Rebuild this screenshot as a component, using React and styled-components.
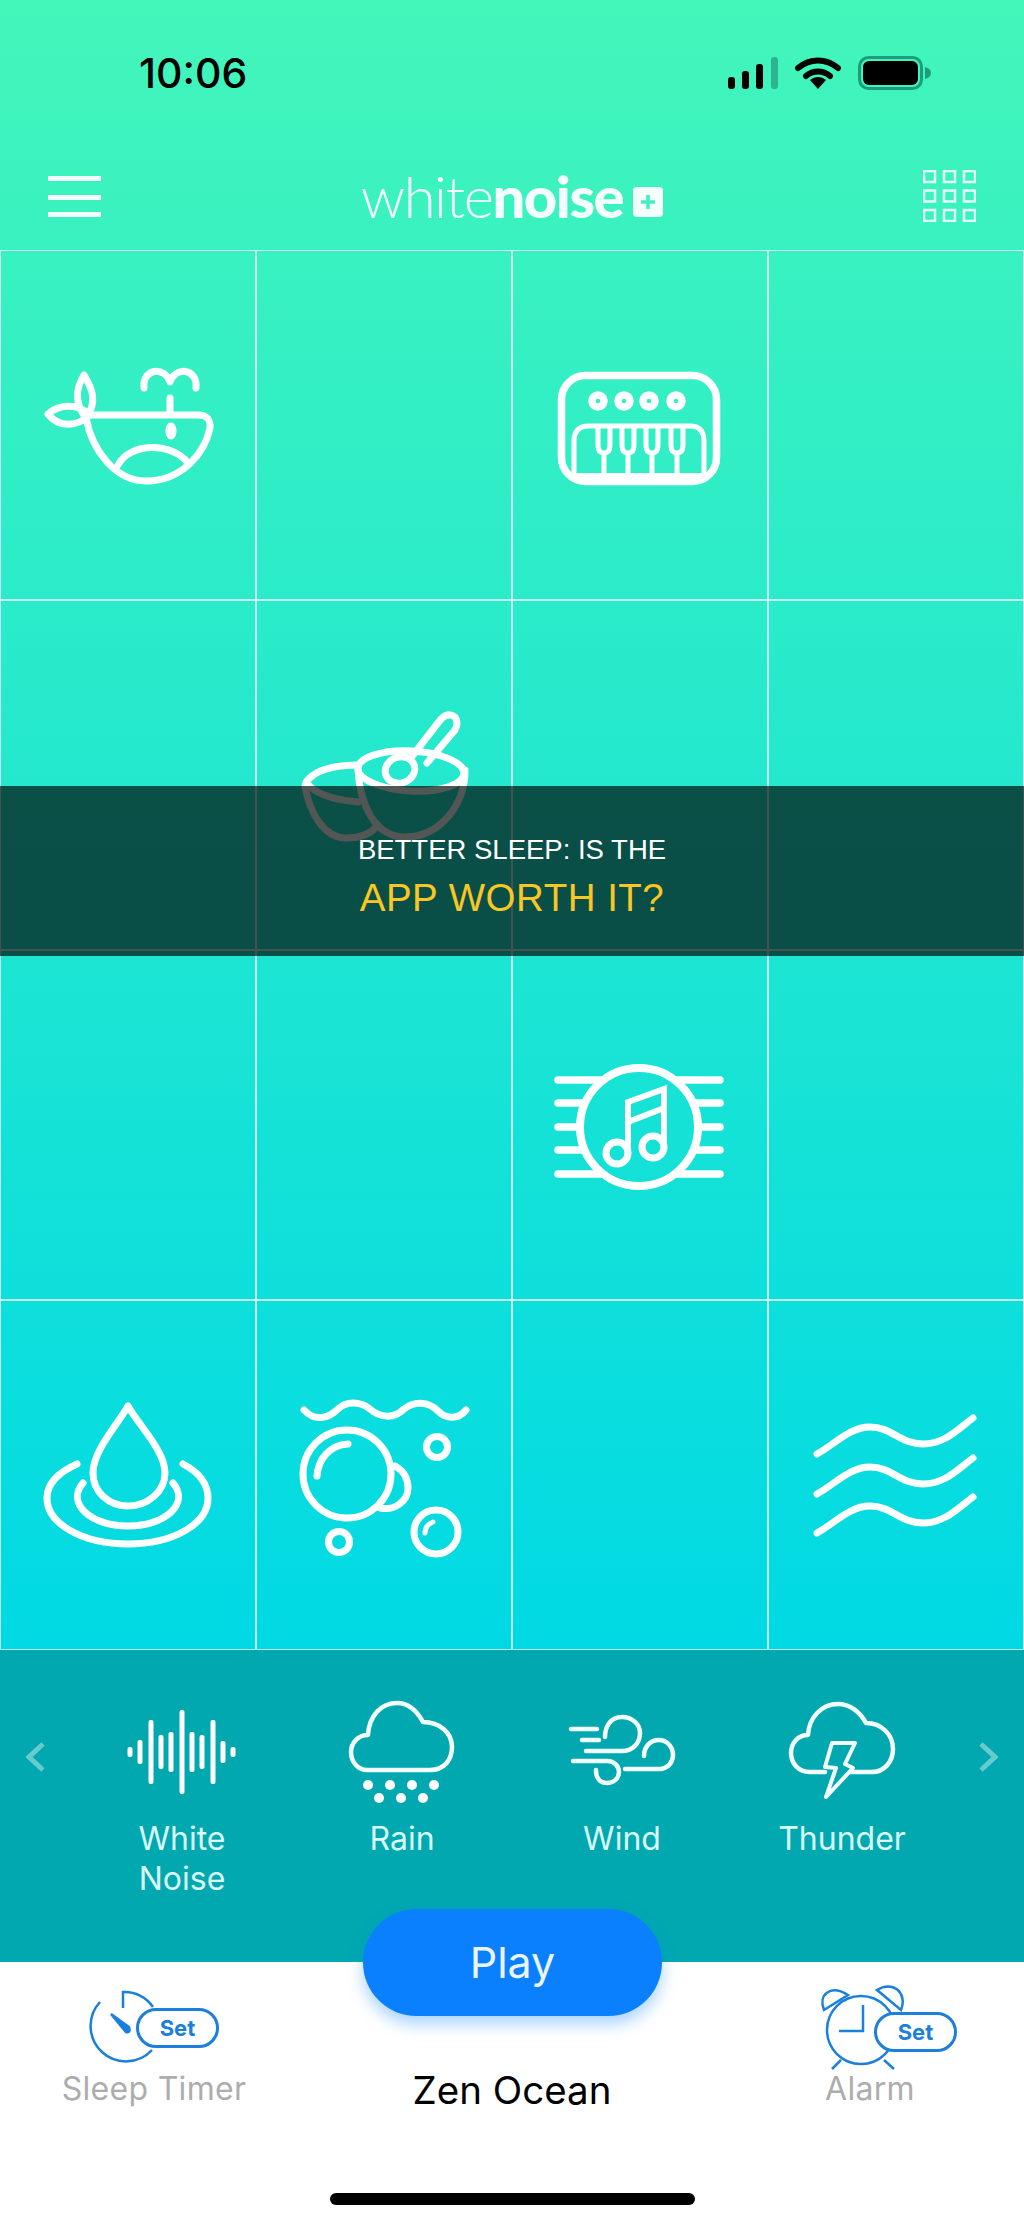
import styled, { createGlobalStyle } from "styled-components";

const GlobalStyle = createGlobalStyle`
  html, body {
    margin: 0;
    padding: 0;
    background: #ffffff;
  }
  * {
    box-sizing: border-box;
  }
`;

const SOUNDS = [
  { name: "White\nNoise", view: "122 1695 120 110", icon: <WaveIcon /> },
  { name: "Rain", view: "342 1695 120 110", icon: <RainIcon /> },
  { name: "Wind", view: "562 1695 120 110", icon: <WindIcon /> },
  { name: "Thunder", view: "782 1695 120 110", icon: <ThunderIcon /> },
];

const CELLS = [
  { view: "38 345 180 160", icon: <WhaleIcon /> },
  {},
  { view: "550 345 180 160", icon: <PianoIcon /> },
  {},
  {},
  { view: "294 695 180 160", icon: <BowlIcon /> },
  {},
  {},
  {},
  {},
  { view: "550 1045 180 160", icon: <MusicIcon /> },
  {},
  { view: "38 1394 180 160", icon: <DropIcon /> },
  { view: "294 1394 180 160", icon: <BubblesIcon /> },
  {},
  { view: "806 1394 180 160", icon: <WavesIcon /> },
];

export default function App() {
  return (
    <Page>
      <GlobalStyle />
      <Sky>
        <StatusBar>
          <Clock>10:06</Clock>
          <StatusIcons>
            <svg width="50" height="32" viewBox="0 0 50 32">
              <rect x="0" y="20" width="7" height="12" rx="3" fill="#000" />
              <rect x="14" y="14" width="7" height="18" rx="3" fill="#000" />
              <rect x="28" y="7" width="7" height="25" rx="3" fill="#000" />
              <rect x="43" y="0" width="7" height="32" rx="3" fill="#2bb48f" />
            </svg>
            <svg width="46" height="32" viewBox="0 0 46 32">
              <path d="M3 11 C15 1 31 1 43 11" fill="none" stroke="#000" strokeWidth="6" strokeLinecap="round" />
              <path d="M11 19 C18 13 28 13 35 19" fill="none" stroke="#000" strokeWidth="6" strokeLinecap="round" />
              <path d="M15 23 C20 19 26 19 31 23 L23 32 Z" fill="#000" />
            </svg>
            <svg width="73" height="34" viewBox="0 0 73 34">
              <rect x="1.5" y="1.5" width="62" height="31" rx="9" fill="none" stroke="#1d9d7c" strokeWidth="3" />
              <rect x="5" y="5" width="55" height="24" rx="6" fill="#000" />
              <path d="M67 11 C71 12 73 14 73 17 C73 20 71 22 67 23 Z" fill="#1d9d7c" />
            </svg>
          </StatusIcons>
        </StatusBar>
        <Header>
          <svg width="53" height="44" viewBox="0 0 53 44">
            <rect x="0" y="2" width="53" height="5" fill="#f4fffb" />
            <rect x="0" y="21" width="53" height="5" fill="#f4fffb" />
            <rect x="0" y="38" width="53" height="5" fill="#f4fffb" />
          </svg>
          <Logo>
            <LogoThin>white</LogoThin>
            <LogoBold>noise</LogoBold>
            <svg width="30" height="30" viewBox="0 0 30 30">
              <rect width="30" height="30" rx="4" fill="#f4fffb" />
              <path d="M15 8 V22 M8 15 H22" stroke="#3ef1c0" strokeWidth="3.500" />
            </svg>
          </Logo>
          <svg width="53" height="52" viewBox="0 0 53 52" fill="none" stroke="#e6fff6" strokeWidth="2.500">
            {[0, 19.500, 39].map((y) =>
              [0, 20, 40].map((x) => <rect key={`${x}-${y}`} x={x + 1} y={y + 1} width="11" height="11" />)
            )}
          </svg>
        </Header>
        <SoundGrid>
          {CELLS.map((cell, idx) => (
            <Cell key={idx}>
              {cell.icon && (
                <CellGlyph viewBox={cell.view}>{cell.icon}</CellGlyph>
              )}
            </Cell>
          ))}
        </SoundGrid>
      </Sky>

      <Panel>
        <Chevron viewBox="0 0 20 40">
          <path d="M17 7 L3 20 L17 33" />
        </Chevron>
        {SOUNDS.map((sound) => (
          <Sound key={sound.name}>
            <SoundGlyph viewBox={sound.view}>{sound.icon}</SoundGlyph>
            <SoundName>{sound.name}</SoundName>
          </Sound>
        ))}
        <Chevron viewBox="0 0 20 40">
          <path d="M3 7 L17 20 L3 33" />
        </Chevron>
      </Panel>

      <Footer>
        <PlayButton>Play</PlayButton>
        <FooterRow>
          <FooterItem>
            <SetIcon>
              <LineIcon viewBox="84 1984 140 86">
                <path d="M100 2002 A34 34 0 1 0 152 2050" />
                <path d="M123 2008 V1992 A34 34 0 0 1 153 2007" />
                <path d="M111 2014 L129 2027 Q131 2033 126 2032 Z" fill="#1b7fdc" />
              </LineIcon>
              <SetPill $left={52} $top={24}>Set</SetPill>
            </SetIcon>
            <ItemLabel>Sleep Timer</ItemLabel>
          </FooterItem>
          <TrackName>Zen Ocean</TrackName>
          <FooterItem>
            <SetIcon>
              <LineIcon viewBox="800 1984 140 86">
                <circle cx="861" cy="2030" r="34" />
                <path d="M863 2005 V2031 H839" />
                <path d="M841 2060 L832 2069 M884 2060 L894 2069" />
                <path d="M824 2010 C818 1995 830 1984 848 1995 Z" />
                <path d="M877 1990 C892 1980 908 1992 901 2010 Z" />
              </LineIcon>
              <SetPill $left={74} $top={28}>Set</SetPill>
            </SetIcon>
            <ItemLabel>Alarm</ItemLabel>
          </FooterItem>
        </FooterRow>
        <HomeIndicator />
      </Footer>

      <Banner>
        <BannerTop>BETTER SLEEP: IS THE</BannerTop>
        <BannerBottom>APP WORTH IT?</BannerBottom>
      </Banner>
    </Page>
  );
}

function WhaleIcon() {
  return (
    <>
      <path d="M88 415 H198 Q211 415 210 428 C205 452 183 481 146 481 C115 481 92 450 86 418" />
      <path d="M118 465 C130 442 172 442 188 463" />
      <path d="M86 418 C72 400 78 385 84 375 C92 388 98 402 86 418 Z" />
      <path d="M90 415 C76 402 58 405 48 414 C58 427 76 428 90 415 Z" />
      <path d="M170 398 V413" />
      <path d="M144 388 C142 368 165 366 170 382 C175 366 198 368 196 388" />
      <ellipse cx="171" cy="431" rx="2" ry="5" fill="#fff" />
    </>
  );
}

function PianoIcon() {
  const keys = [604, 628, 652, 677];
  const dots = [598, 624, 649, 676];
  return (
    <>
      <rect x="561.500" y="375.500" width="155" height="106" rx="24" strokeWidth="7.500" />
      <path d="M574 478 V441 Q574 426 589 426 H690 Q704 426 704 441 V478" strokeWidth="5" />
      <path d="M574 477 H704" strokeWidth="8" />
      {keys.map((x) => (
        <path key={x} d={`M${x - 6} 428 V445 Q${x - 6} 453 ${x} 453 Q${x + 6} 453 ${x + 6} 445 V428 M${x} 453 V476`} strokeWidth="5" />
      ))}
      {dots.map((x) => (
        <circle key={x} cx={x} cy="401" r="6" strokeWidth="7.500" />
      ))}
    </>
  );
}

function BowlIcon() {
  return (
    <>
      <ellipse cx="411" cy="771" rx="53" ry="20" transform="rotate(3 411 771)" />
      <path d="M358 770 C360 805 375 837 405 837 C440 837 465 805 465 770" />
      <path d="M358 765 C335 765 315 770 306 782 C315 795 335 800 358 802" />
      <path d="M305 786 C310 815 325 838 346 838 C358 838 370 835 378 825" />
      <ellipse cx="400" cy="770" rx="15" ry="13" transform="rotate(-20 400 770)" />
      <path d="M410 759 L441 719 Q448 712 455 717 Q459 723 455 730 L427 763" />
    </>
  );
}

function MusicIcon() {
  const rows = [1080, 1103, 1127, 1150, 1174];
  return (
    <>
      <circle cx="639" cy="1127" r="59" strokeWidth="8" />
      {rows.map((y, idx) => {
        const gap = idx === 2 ? 60 : idx === 1 || idx === 3 ? 56 : 38;
        return <path key={y} d={`M558 ${y} H${639 - gap} M${639 + gap} ${y} H720`} strokeWidth="7.500" />;
      })}
      <circle cx="617" cy="1153" r="11" strokeWidth="7" />
      <circle cx="653" cy="1147" r="11" strokeWidth="7" />
      <path d="M628 1153 V1102 L664 1089 V1147" strokeWidth="6" strokeLinejoin="miter" strokeLinecap="butt" />
      <path d="M628 1122 L664 1108" strokeWidth="6" strokeLinecap="butt" />
    </>
  );
}

function DropIcon() {
  return (
    <>
      <path d="M128 1405 C116 1426 93 1450 93 1472 C93 1491 109 1505 128 1505 C147 1505 165 1491 165 1472 C165 1450 140 1426 128 1405 Z" />
      <path d="M83 1482 C66 1502 90 1525 128 1525 C166 1525 190 1502 173 1482" />
      <path d="M77 1463 C57 1472 47 1484 47 1497 C47 1523 83 1543 128 1543 C173 1543 208 1523 208 1497 C208 1484 200 1472 183 1463" />
    </>
  );
}

function BubblesIcon() {
  return (
    <>
      <path d="M304 1409 C316 1422 330 1416 338 1408 C346 1400 360 1400 370 1408 C380 1417 394 1418 404 1408 C414 1400 428 1400 438 1410 C446 1418 458 1419 466 1409" />
      <circle cx="347" cy="1473" r="44" />
      <path d="M317 1475 C318 1458 330 1444 348 1443" />
      <path d="M395 1465 C404 1470 408 1478 408 1487 C408 1500 395 1510 380 1507" />
      <circle cx="437" cy="1446" r="10.500" />
      <circle cx="339" cy="1541" r="10.500" />
      <circle cx="436" cy="1531" r="22" />
      <path d="M425 1532 C425 1527 428 1523 433 1521" strokeWidth="5" />
    </>
  );
}

function WavesIcon() {
  const offsets = [0, 40, 79];
  return (
    <>
      {offsets.map((dy) => (
        <path
          key={dy}
          d={`M817 ${1453 + dy} C835 ${1443 + dy} 850 ${1426 + dy} 870 ${1426 + dy} C892 ${1426 + dy} 900 ${1443 + dy} 923 ${1443 + dy} C945 ${1443 + dy} 958 ${1428 + dy} 973 ${1417 + dy}`}
        />
      ))}
    </>
  );
}

function WaveIcon() {
  const bars = [
    [130, 5],
    [140, 12],
    [151, 32],
    [161, 17],
    [171, 20],
    [182, 42],
    [192, 20],
    [202, 17],
    [213, 32],
    [223, 11],
    [233, 5],
  ];
  return (
    <>
      {bars.map(([x, half]) => (
        <rect key={x} x={x - 2.500} y={1752 - half} width="5" height={half * 2} rx="2" fill="#fff" stroke="none" />
      ))}
    </>
  );
}

function RainIcon() {
  const top = [368, 390, 412, 434];
  const bottom = [379, 401, 423];
  return (
    <>
      <path d="M367 1770 H430 C444 1770 452 1760 452 1747 C452 1733 440 1722 423 1722 C417 1711 408 1703 397 1703 C381 1703 369 1716 368 1735 C358 1735 351 1743 351 1752 C351 1762 358 1770 367 1770 Z" />
      {top.map((x) => (
        <circle key={x} cx={x} cy="1785" r="5" fill="#fff" stroke="none" />
      ))}
      {bottom.map((x) => (
        <circle key={x} cx={x} cy="1798" r="5" fill="#fff" stroke="none" />
      ))}
    </>
  );
}

function WindIcon() {
  return (
    <>
      <path d="M571 1729 H597 M582 1740 H599" />
      <path d="M586 1751 H622 C632 1751 640 1744 640 1733 C640 1724 632 1717 622 1717 C611 1717 605 1726 605 1737" />
      <path d="M573 1761 H607 C615 1761 619 1767 619 1772 C619 1779 613 1783 607 1783 C600 1783 596 1778 596 1770" />
      <path d="M625 1769 H659 C668 1769 673 1762 673 1755 C673 1747 667 1740 659 1740 C650 1740 644 1747 644 1756" />
    </>
  );
}

function ThunderIcon() {
  return (
    <>
      <path d="M825 1772 H810 C798 1772 791 1763 791 1753 C791 1743 798 1735 808 1735 C809 1717 822 1704 838 1704 C850 1704 860 1712 866 1723 C882 1723 893 1735 893 1749 C893 1762 884 1772 872 1772 H850" />
      <path d="M832 1743 H855 L845 1764 L853 1768 L826 1797 L836 1768 L825 1767 Z" strokeWidth="4" strokeLinejoin="round" />
    </>
  );
}

const Page = styled.div`
  position: relative;
  width: 1024px;
  height: 2224px;
  overflow: hidden;
  display: flex;
  flex-direction: column;
  font-family: Inter, "Liberation Sans", sans-serif;
`;

const Sky = styled.div`
  height: 1650px;
  background: linear-gradient(180deg, #43f6ba 0%, #00d9e4 100%);
`;

const StatusBar = styled.div`
  display: flex;
  justify-content: space-between;
  align-items: center;
  height: 110px;
  padding: 36px 93px 0 139px;
`;

const Clock = styled.span`
  font-size: 41px;
  font-weight: 500;
  color: #000000;
`;

const StatusIcons = styled.div`
  display: flex;
  align-items: center;
  gap: 17px;
`;

const Header = styled.div`
  display: flex;
  justify-content: space-between;
  align-items: center;
  height: 140px;
  padding: 32px 48px 0;
`;

const Logo = styled.div`
  display: flex;
  align-items: flex-end;
  color: #f4fffb;
  font-family: Lato, "Noto Sans", sans-serif;
  font-size: 58px;
  line-height: 44px;
  letter-spacing: -1.500px;

  svg {
    margin: 0 0 1px 10px;
  }
`;

const LogoThin = styled.span`
  font-weight: 300;
`;

const LogoBold = styled.span`
  font-weight: 900;
`;

const SoundGrid = styled.div`
  display: grid;
  grid-template-columns: repeat(4, 256px);
  grid-template-rows: repeat(4, 1fr);
  height: 1400px;
`;

const Cell = styled.div`
  display: flex;
  align-items: center;
  justify-content: center;
  border: 1px solid rgba(255, 255, 255, 0.75);
`;

const CellGlyph = styled.svg`
  width: 180px;
  height: 160px;
  overflow: visible;
  fill: none;
  stroke: #ffffff;
  stroke-width: 7;
  stroke-linecap: round;
  stroke-linejoin: round;
`;

const Panel = styled.div`
  display: grid;
  grid-template-columns: 72px repeat(4, 220px) 72px;
  height: 312px;
  padding-top: 45px;
  background: #01a8b0;
`;

const Chevron = styled.svg`
  width: 20px;
  height: 40px;
  margin: 42px 0 0 26px;
  fill: none;
  stroke: rgba(255, 255, 255, 0.4);
  stroke-width: 5;
`;

const Sound = styled.div`
  display: flex;
  flex-direction: column;
  align-items: center;
`;

const SoundGlyph = styled.svg`
  width: 120px;
  height: 110px;
  fill: none;
  stroke: #f2fffe;
  stroke-width: 4.500;
  stroke-linecap: round;
  stroke-linejoin: round;
`;

const SoundName = styled.div`
  margin-top: 14px;
  font-size: 32px;
  line-height: 40px;
  text-align: center;
  white-space: pre-line;
  color: #d9fbf9;
`;

const Footer = styled.div`
  position: relative;
  flex: 1;
  display: flex;
  flex-direction: column;
  background: #ffffff;
`;

const PlayButton = styled.div`
  position: absolute;
  top: -53px;
  left: 363px;
  display: flex;
  align-items: center;
  justify-content: center;
  width: 299px;
  height: 107px;
  padding-bottom: 2px;
  border-radius: 54px;
  font-size: 43px;
  color: #eaf4ff;
  background: #0a80ff;
  box-shadow: 0 8px 16px rgba(10, 128, 255, 0.35);
`;

const FooterRow = styled.div`
  display: grid;
  grid-template-columns: 308px 1fr 308px;
  height: 231px;
`;

const FooterItem = styled.div`
  display: flex;
  flex-direction: column;
  align-items: center;
  padding-top: 22px;
`;

const SetIcon = styled.div`
  position: relative;
  width: 140px;
  height: 86px;
`;

const LineIcon = styled.svg`
  display: block;
  width: 140px;
  height: 86px;
  overflow: visible;
  fill: none;
  stroke: #1b7fdc;
  stroke-width: 2.500;
`;

const SetPill = styled.div`
  position: absolute;
  left: ${(props) => props.$left}px;
  top: ${(props) => props.$top}px;
  display: flex;
  align-items: center;
  justify-content: center;
  width: 83px;
  height: 40px;
  border: 3px solid #1b7fdc;
  border-radius: 20px;
  font-size: 22px;
  font-weight: 700;
  color: #1b7fdc;
  background: #ffffff;
`;

const ItemLabel = styled.div`
  margin-top: -1px;
  font-size: 32px;
  line-height: 40px;
  letter-spacing: 0.300px;
  color: #adadad;
`;

const TrackName = styled.div`
  padding-top: 104px;
  font-size: 38.500px;
  line-height: 48px;
  text-align: center;
  color: #000000;
`;

const HomeIndicator = styled.div`
  width: 365px;
  height: 12px;
  margin: 0 auto;
  border-radius: 6px;
  background: #000000;
`;

const Banner = styled.div`
  position: absolute;
  top: 786px;
  left: 0;
  right: 0;
  height: 170px;
  display: flex;
  flex-direction: column;
  align-items: center;
  justify-content: center;
  padding-top: 8px;
  font-family: "Liberation Sans", Arial, sans-serif;
  background: rgba(0, 7, 6, 0.68);
`;

const BannerTop = styled.div`
  font-size: 27.500px;
  line-height: 46px;
  color: #ffffff;
`;

const BannerBottom = styled.div`
  font-size: 38.500px;
  line-height: 50px;
  letter-spacing: 0.500px;
  color: #f9c623;
`;
